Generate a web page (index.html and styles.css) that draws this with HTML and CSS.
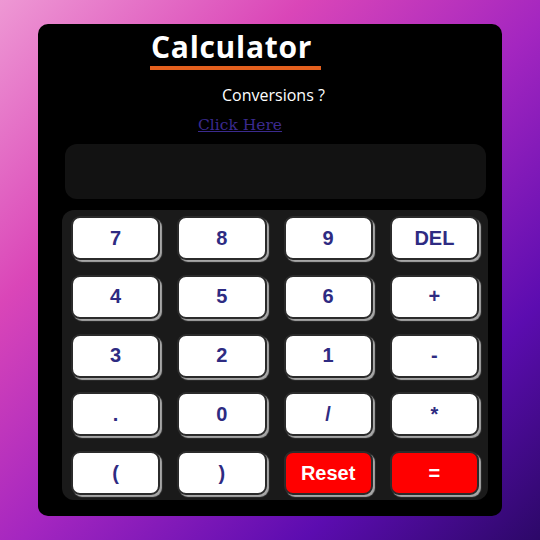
FILE: index.html
```html
<!DOCTYPE html>
<html>
<head>
<meta charset="utf-8">
<link rel="stylesheet" href="styles.css">
</head>
<body>
<div class="card">
  <h1 class="title">Calculator</h1>
  <p class="conv">Conversions ?</p>
  <a class="link" href="#">Click Here</a>
  <div class="display"></div>
  <div class="keypad">
    <button class="key">7</button>
    <button class="key">8</button>
    <button class="key">9</button>
    <button class="key">DEL</button>
    <button class="key">4</button>
    <button class="key">5</button>
    <button class="key">6</button>
    <button class="key">+</button>
    <button class="key">3</button>
    <button class="key">2</button>
    <button class="key">1</button>
    <button class="key">-</button>
    <button class="key">.</button>
    <button class="key">0</button>
    <button class="key">/</button>
    <button class="key">*</button>
    <button class="key">(</button>
    <button class="key">)</button>
    <button class="key red">Reset</button>
    <button class="key red">=</button>
  </div>
</div>
</body>
</html>
```
FILE: styles.css
```css
html, body {
  margin: 0;
  padding: 0;
}
body {
  width: 540px;
  height: 540px;
  overflow: hidden;
  background: linear-gradient(135deg, #ee98d4 0%, #da46b8 28%, #a426c0 52%, #5c0cb0 78%, #2c0868 100%);
  font-family: "Open Sans", sans-serif;
}
.card {
  margin: 24px 0 0 38px;
  width: 464px;
  height: 492px;
  box-sizing: border-box;
  background: #000;
  border-radius: 10px;
  padding-top: 6px;
  display: flex;
  flex-direction: column;
  align-items: flex-start;
}
.title {
  margin: 0 0 0 112px;
  font-size: 30px;
  line-height: 34px;
  letter-spacing: 0.7px;
  font-weight: 700;
  color: #fff;
  padding: 0 9px 2px 1px;
  border-bottom: 4px solid #e4601e;
}
.conv {
  margin: 15px 0 0 184px;
  font-size: 16px;
  line-height: 20px;
  color: #fff;
}
.link {
  margin: 10px 0 0 160px;
  font-family: "DejaVu Serif", serif;
  font-size: 15.5px;
  line-height: 20px;
  color: #3b2a8e;
}
.display {
  margin: 9px 0 0 27px;
  width: 421px;
  height: 55px;
  background: #121212;
  border-radius: 12px;
}
.keypad {
  margin: 11px 0 0 24px;
  width: 426px;
  height: 290px;
  box-sizing: border-box;
  background: #1a1a1a;
  border-radius: 12px;
  padding: 6px 9px 5px 9px;
  display: grid;
  grid-template-columns: repeat(4, 1fr);
  grid-template-rows: repeat(5, 44px);
  column-gap: 17px;
  row-gap: 14.75px;
}
.key {
  background: #fff;
  border: 2px solid #2b2b2b;
  border-radius: 9px;
  box-shadow: 2px 2px 1px 0 #a8a8a8;
  font-family: "Liberation Sans", Arial, sans-serif;
  font-weight: 700;
  font-size: 20px;
  color: #2e2b82;
  padding: 0;
}
.key.red {
  background: #ff0000;
  color: #fff;
}
```
